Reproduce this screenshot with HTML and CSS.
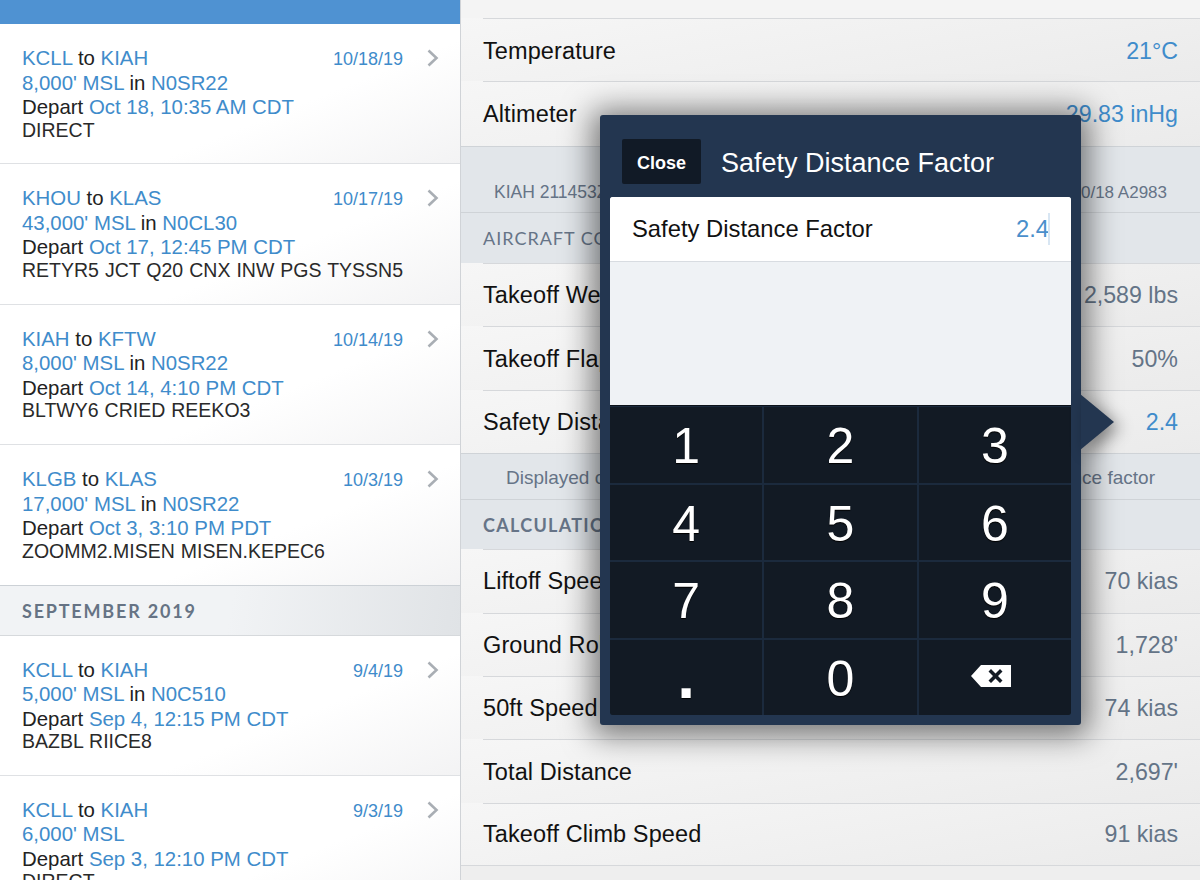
FILE: index.html
```html
<!DOCTYPE html>
<html lang="en">
<head>
<meta charset="utf-8">
<title>Flights</title>
<link rel="stylesheet" href="styles.css">
</head>
<body>
<div class="app">
  <aside class="list">
    <div class="selected-bar"></div>
    <a class="flight">
      <div class="flight-text">
        <div class="l1"><b>KCLL</b> to <b>KIAH</b></div>
        <div class="l1"><b>8,000' MSL</b> in <b>N0SR22</b></div>
        <div class="l1">Depart <b>Oct 18, 10:35 AM CDT</b></div>
        <div class="route">DIRECT</div>
      </div>
      <span class="date">10/18/19</span>
      <svg class="chev" viewBox="0 0 14 18"><path d="M2.5 1.5 10.5 9 2.5 16.5"/></svg>
    </a>
    <a class="flight">
      <div class="flight-text">
        <div class="l1"><b>KHOU</b> to <b>KLAS</b></div>
        <div class="l1"><b>43,000' MSL</b> in <b>N0CL30</b></div>
        <div class="l1">Depart <b>Oct 17, 12:45 PM CDT</b></div>
        <div class="route">RETYR5 JCT Q20 CNX INW PGS TYSSN5</div>
      </div>
      <span class="date">10/17/19</span>
      <svg class="chev" viewBox="0 0 14 18"><path d="M2.5 1.5 10.5 9 2.5 16.5"/></svg>
    </a>
    <a class="flight">
      <div class="flight-text">
        <div class="l1"><b>KIAH</b> to <b>KFTW</b></div>
        <div class="l1"><b>8,000' MSL</b> in <b>N0SR22</b></div>
        <div class="l1">Depart <b>Oct 14, 4:10 PM CDT</b></div>
        <div class="route">BLTWY6 CRIED REEKO3</div>
      </div>
      <span class="date">10/14/19</span>
      <svg class="chev" viewBox="0 0 14 18"><path d="M2.5 1.5 10.5 9 2.5 16.5"/></svg>
    </a>
    <a class="flight last">
      <div class="flight-text">
        <div class="l1"><b>KLGB</b> to <b>KLAS</b></div>
        <div class="l1"><b>17,000' MSL</b> in <b>N0SR22</b></div>
        <div class="l1">Depart <b>Oct 3, 3:10 PM PDT</b></div>
        <div class="route">ZOOMM2.MISEN MISEN.KEPEC6</div>
      </div>
      <span class="date">10/3/19</span>
      <svg class="chev" viewBox="0 0 14 18"><path d="M2.5 1.5 10.5 9 2.5 16.5"/></svg>
    </a>
    <div class="month">SEPTEMBER 2019</div>
    <a class="flight">
      <div class="flight-text">
        <div class="l1"><b>KCLL</b> to <b>KIAH</b></div>
        <div class="l1"><b>5,000' MSL</b> in <b>N0C510</b></div>
        <div class="l1">Depart <b>Sep 4, 12:15 PM CDT</b></div>
        <div class="route">BAZBL RIICE8</div>
      </div>
      <span class="date">9/4/19</span>
      <svg class="chev" viewBox="0 0 14 18"><path d="M2.5 1.5 10.5 9 2.5 16.5"/></svg>
    </a>
    <a class="flight">
      <div class="flight-text">
        <div class="l1"><b>KCLL</b> to <b>KIAH</b></div>
        <div class="l1"><b>6,000' MSL</b></div>
        <div class="l1">Depart <b>Sep 3, 12:10 PM CDT</b></div>
        <div class="route">DIRECT</div>
      </div>
      <span class="date">9/3/19</span>
      <svg class="chev" viewBox="0 0 14 18"><path d="M2.5 1.5 10.5 9 2.5 16.5"/></svg>
    </a>
  </aside>

  <main class="detail">
    <div class="spacer"></div>
    <div class="row first"><span>Temperature</span><span class="val blue">21°C</span></div>
    <div class="row alt"><span>Altimeter</span><span class="val blue">29.83 inHg</span></div>
    <div class="metar"><span>KIAH 211453Z</span><span class="metar-end">10/18 A2983</span></div>
    <div class="section">AIRCRAFT CONFIGURATION</div>
    <div class="row"><span>Takeoff Weight</span><span class="val">2,589 lbs</span></div>
    <div class="row"><span>Takeoff Flaps</span><span class="val">50%</span></div>
    <div class="row"><span>Safety Distance Factor</span><span class="val blue">2.4</span></div>
    <div class="note"><span>Displayed calculations include the</span><span>safety distance factor</span></div>
    <div class="section calc">CALCULATIONS</div>
    <div class="row"><span>Liftoff Speed</span><span class="val">70 kias</span></div>
    <div class="row"><span>Ground Roll</span><span class="val">1,728'</span></div>
    <div class="row"><span>50ft Speed</span><span class="val">74 kias</span></div>
    <div class="row"><span>Total Distance</span><span class="val">2,697'</span></div>
    <div class="row closing"><span>Takeoff Climb Speed</span><span class="val">91 kias</span></div>
  </main>
</div>

<section class="popover">
  <svg class="arrow" viewBox="0 0 34 56"><path d="M0 0 34 28 0 56Z"/></svg>
  <header class="pop-head">
    <button class="close">Close</button>
    <h1>Safety Distance Factor</h1>
  </header>
  <div class="pop-body">
    <div class="field"><span>Safety Distance Factor</span><span class="field-val">2.4<i class="caret"></i></span></div>
    <div class="blank"></div>
  </div>
  <div class="keypad">
    <div class="key">1</div><div class="key">2</div><div class="key">3</div>
    <div class="key">4</div><div class="key">5</div><div class="key">6</div>
    <div class="key">7</div><div class="key">8</div><div class="key">9</div>
    <div class="key dot">.</div><div class="key">0</div>
    <div class="key erase">
      <svg class="bksp" viewBox="0 0 42 24"><path fill-rule="evenodd" d="M11 1H41V23H11L1 12ZM21 5 25.500 9.500 30 5 32.500 7.500 28 12 32.500 16.500 30 19 25.500 14.500 21 19 18.500 16.500 23 12 18.500 7.500Z"/></svg>
    </div>
  </div>
</section>
</body>
</html>
```

FILE: styles.css
```css
* { box-sizing: border-box; }
html, body { margin: 0; height: 880px; overflow: hidden; }
body {
  font-family: "Liberation Sans", Arial, sans-serif;
  color: #111;
  position: relative;
  background: #eee;
}
.app { display: flex; width: 1200px; height: 880px; overflow: hidden; }

/* left list */
.list {
  width: 461px;
  flex: none;
  border-right: 1px solid #d0d3d7;
  background: #fff;
}
.selected-bar { height: 24px; background: #4f92d2; }
.flight {
  display: flex;
  align-items: flex-start;
  height: 140.4px;
  padding: 22px 20px 0 22px;
  border-bottom: 1px solid #dfe1e4;
  background: linear-gradient(158deg, #fff 62%, #f3f3f4 100%);
}
.flight.last { border-bottom: 1px solid #ccd1d6; }
.flight-text { flex: 1; min-width: 0; font-size: 20.400px; line-height: 24.500px; color: #222; white-space: nowrap; }
.flight-text b { font-weight: normal; color: #3f8ccb; }
.route { font-size: 19.500px; line-height: 22px; color: #2a2a2a; margin-top: -1px; word-spacing: .6px; }
.date { font-size: 18px; color: #3f8ccb; line-height: 26px; margin-right: 23px; flex: none; width: 0; display: flex; justify-content: flex-end; }
.chev { width: 14px; height: 18px; margin-top: 3px; flex: none; fill: none; stroke: #a9aeb4; stroke-width: 2.600; }
.month {
  height: 50px;
  padding-left: 22px;
  line-height: 50px;
  font-family: Lato, "Liberation Sans", sans-serif;
  font-size: 18px;
  font-weight: bold;
  letter-spacing: 1.800px;
  color: #667384;
  background: linear-gradient(100deg, #f1f3f5 50%, #e0e3e6 100%);
  border-bottom: 1px solid #d6d9dc;
}

/* right detail */
.detail { flex: 1; min-width: 0; background: #eeeeee; }
.spacer { height: 18px; background: #f4f4f4; }
.row {
  display: flex;
  justify-content: space-between;
  align-items: center;
  height: 63.400px;
  padding: 2px 22px 0;
  font-size: 23.500px;
  letter-spacing: .1px;
  color: #111;
  background: linear-gradient(170deg, #f6f6f6 0%, #ebebeb 100%);
  position: relative;
}
.row::before {
  content: "";
  position: absolute;
  left: 22px;
  right: 0;
  top: 0;
  border-top: 1px solid #d6d8db;
}
.row.first { height: 63px; padding-top: 3px; }
.row.alt { height: 65px; }
.row.closing { border-bottom: 1px solid #d6d8db; }
.val { font-size: 23.200px; letter-spacing: 0; color: #647487; }
.val.blue { color: #3f8ccb; }
.metar, .note, .section { color: #667487; border-top: 1px solid #cfd3d7; }
.metar {
  height: 66px;
  display: flex;
  justify-content: space-between;
  align-items: flex-end;
  padding: 0 33px 9px 33px;
  font-size: 17.500px;
  background: #e2e6ea;
}
.metar-end { font-size: 17px; }
.section {
  height: 51px;
  line-height: 50px;
  padding-left: 22px;
  font-family: Lato, "Liberation Sans", sans-serif;
  font-size: 18px;
  background: #e2e6ea;
  letter-spacing: 1px;
}
.section.calc { height: 50px; font-weight: bold; letter-spacing: 1.300px; }
.note {
  height: 46px;
  display: flex;
  justify-content: space-between;
  align-items: center;
  padding: 3px 45px 0;
  font-size: 19px;
  background: #e2e6ea;
}

/* popover */
.popover {
  position: absolute;
  left: 600px;
  top: 115px;
  width: 481px;
  height: 610px;
  padding: 0 10px 10px;
  background: #233650;
  border-radius: 3px;
  box-shadow: 0 3px 30px 8px rgba(0,0,0,.5);
  display: flex;
  flex-direction: column;
}
.arrow { position: absolute; left: 481px; top: 279px; width: 33px; height: 56px; fill: #233650; filter: drop-shadow(6px 5px 8px rgba(0,0,0,.4)); }
.pop-head { height: 82px; flex: none; display: flex; align-items: center; gap: 20px; padding: 12px 0 0 12px; }
.close {
  width: 79px;
  height: 45px;
  margin-top: -1px;
  border: 0;
  border-radius: 2px;
  background: #111a26;
  color: #fff;
  font: bold 18px "Liberation Sans", Arial, sans-serif;
  padding: 3px 0 0;
}
.pop-head h1 { margin: 3px 0 0; font-size: 27px; font-weight: normal; color: #fff; }
.pop-body { height: 208px; flex: none; background: #eff2f5; border-radius: 3px 3px 0 0; display: flex; flex-direction: column; }
.field {
  height: 65px;
  background: #fff;
  border-bottom: 1px solid #d8dce1;
  border-radius: 3px 3px 0 0;
  display: flex;
  justify-content: space-between;
  align-items: center;
  padding: 0 22px;
  font-size: 23.800px;
}
.field-val { color: #4a8fcb; position: relative; }
.caret { position: absolute; right: -1px; top: -2px; bottom: -2px; border-right: 2px solid #d8e6f3; }
.blank { flex: 1; }
.keypad {
  flex: 1;
  display: grid;
  grid-template-columns: repeat(3, 1fr);
  grid-template-rows: repeat(4, 1fr);
  gap: 2px 2px;
  padding-top: 1px;
  background: #1b2a3d;
  border-top: 1px solid #0c121a;
  border-radius: 0 0 3px 3px;
  overflow: hidden;
}
.key {
  background: #121a24;
  color: #fff;
  font-size: 50px;
  min-height: 0;
  padding-top: 3px;
  display: flex;
  align-items: center;
  justify-content: center;
  text-shadow: 0 1px 1px #000;
}
.key.dot { font-size: 64px; font-weight: bold; line-height: 50px; padding: 0 0 2px; }
.key.erase { padding-top: 0; }
.bksp { width: 42px; height: 24px; fill: #fff; margin: -2px 8px 0 0; }
```
